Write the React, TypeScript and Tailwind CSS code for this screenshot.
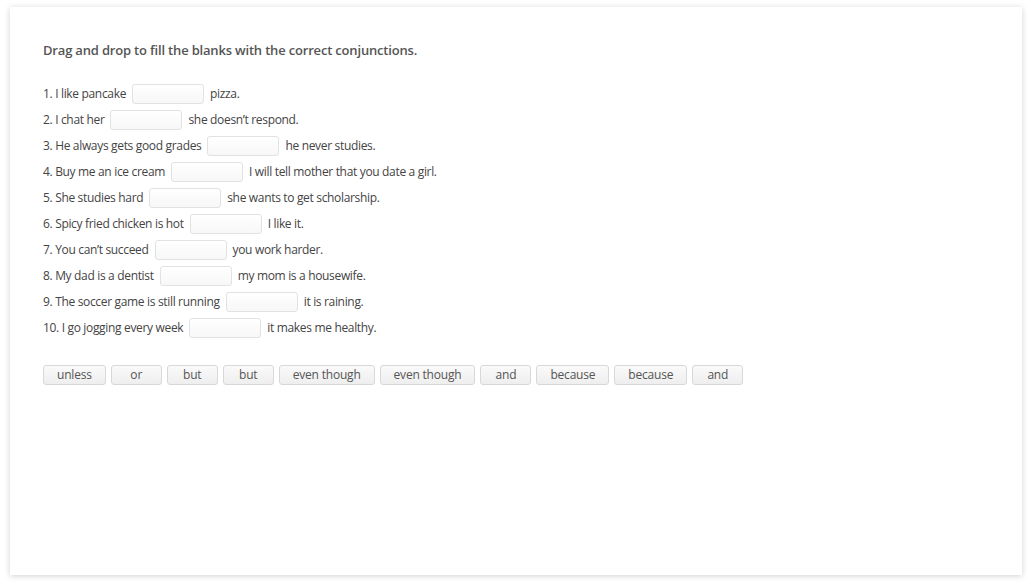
const rows: [string, string][] = [
  ["1. I like pancake", "pizza."],
  ["2. I chat her", "she doesn’t respond."],
  ["3. He always gets good grades", "he never studies."],
  ["4. Buy me an ice cream", "I will tell mother that you date a girl."],
  ["5. She studies hard", "she wants to get scholarship."],
  ["6. Spicy fried chicken is hot", "I like it."],
  ["7. You can’t succeed", "you work harder."],
  ["8. My dad is a dentist", "my mom is a housewife."],
  ["9. The soccer game is still running", "it is raining."],
  ["10. I go jogging every week", "it makes me healthy."],
];

const words = ["unless", "or", "but", "but", "even though", "even though", "and", "because", "because", "and"];

const App = () => {
  return (
    <div className="bg-white w-[1031px] h-[587px] pt-[7px] pl-[10px] pr-[9px] font-['Open_Sans',sans-serif] text-[#444]">
      <div className="bg-white h-[568px] shadow-[0_1px_6px_rgba(0,0,0,0.18)] pl-[33px] pt-[33px]">
        {/* Title */}
        <h2 className="text-[13px] font-semibold text-[#555] leading-[20px] tracking-[-0.18px]">
          Drag and drop to fill the blanks with the correct conjunctions.
        </h2>

        {/* Sentences */}
        <div className="mt-[21px] flex flex-col">
          {rows.map(([before, after], i) => (
            <div key={i} className="flex items-center h-[26px] text-[12px] tracking-[-0.33px]">
              <span>{before}</span>
              <span className="mx-[6px] w-[72px] h-[20px] rounded-[3px] border border-[#e2e2e2] bg-gradient-to-b from-white to-[#f7f7f7]" />
              <span>{after}</span>
            </div>
          ))}
        </div>

        {/* Word bank */}
        <div className="mt-[24px] flex gap-[5px]">
          {words.map((w, i) => (
            <button
              key={i}
              className="h-[20px] min-w-[51px] px-[13px] rounded-[3px] border border-[#d8d8d8] bg-gradient-to-b from-[#fafafa] to-[#eeeeee] text-[12px] tracking-[-0.2px] leading-none text-[#555]"
            >
              {w}
            </button>
          ))}
        </div>
      </div>
    </div>
  );
};

export default App;
